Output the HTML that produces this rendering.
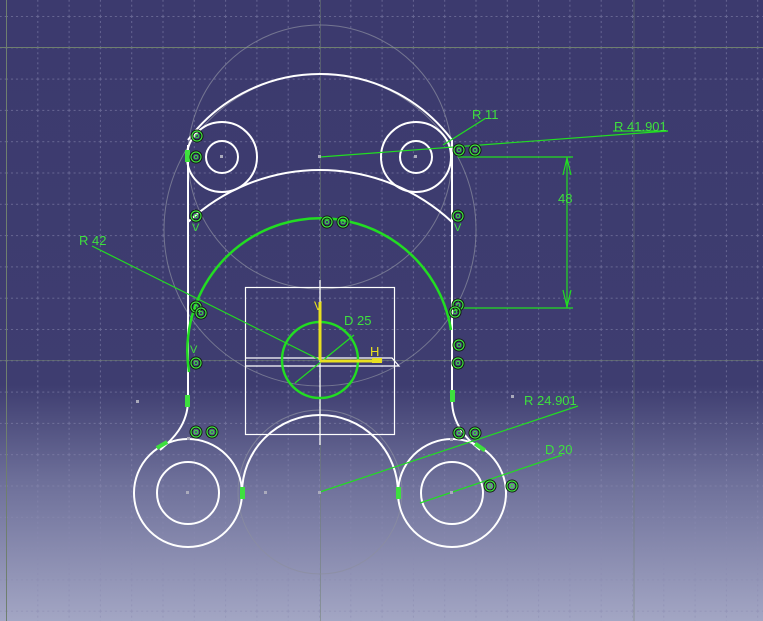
<!DOCTYPE html>
<html><head><meta charset="utf-8"><style>
html,body{margin:0;padding:0;width:763px;height:621px;overflow:hidden}
body{background:linear-gradient(to bottom,#3c3a6e 0px,#3e3d70 385px,#6d6f99 480px,#a3a6c4 621px);font-family:"Liberation Sans",sans-serif}
svg{position:absolute;left:0;top:0}
</style></head><body>
<svg width="763" height="621" viewBox="0 0 763 621">
<defs>
<pattern id="g" x="6" y="16" width="31.3" height="31.3" patternUnits="userSpaceOnUse">
<path d="M0.5 0V31.3M0 0.5H31.3" stroke="#8a8ab0" stroke-width="1" stroke-dasharray="2 3" fill="none" opacity="0.55"/>
</pattern>
<g id="c"><circle r="5" fill="none" stroke="#111" stroke-width="3"/><circle r="5" fill="none" stroke="#3ee03e" stroke-width="1.2"/><circle r="1.8" fill="none" stroke="#3ee03e" stroke-width="1"/></g>
</defs>
<rect width="763" height="621" fill="url(#g)"/>
<g stroke="#6f7f6f" stroke-width="1" fill="none">
<line x1="6.5" y1="0" x2="6.5" y2="621"/>
<line x1="0" y1="47.5" x2="763" y2="47.5"/>
<line x1="0" y1="360.5" x2="763" y2="360.5" opacity="0.6"/>
<line x1="320.5" y1="0" x2="320.5" y2="621" opacity="0.5"/>
<line x1="634" y1="0" x2="634" y2="621" opacity="0.5"/>
</g>
<g stroke="#8c8fa0" stroke-width="1" fill="none" opacity="0.7">
<circle cx="320" cy="157" r="132"/>
<circle cx="320" cy="230" r="156"/>
<circle cx="320" cy="492" r="82"/>
</g>
<g stroke="#fff" stroke-width="2" fill="none">
<path d="M188 140 A165 165 0 0 1 452 140"/>
<path d="M188 222 A193.5 193.5 0 0 1 452 222"/>
<circle cx="222" cy="157" r="35"/><circle cx="222" cy="157" r="16"/>
<circle cx="416" cy="157" r="35"/><circle cx="416" cy="157" r="16"/>
<line x1="188" y1="145" x2="188" y2="400"/>
<line x1="452" y1="140" x2="452" y2="400"/>
<path d="M188 400 C188 425 172 440 160 450"/>
<path d="M452 400 C452 425 468 440 480 450"/>
<circle cx="188" cy="493" r="54"/><circle cx="188" cy="493" r="31"/>
<circle cx="452" cy="493" r="54"/><circle cx="452" cy="493" r="31"/>
<path d="M242 493 A78 78 0 0 1 398 493"/>
</g>
<g stroke="#fff" stroke-width="1.2" fill="none">
<rect x="245.5" y="287.5" width="149" height="147"/>
<path d="M245 358 L392 358 L399 366 L245 366"/>
<line x1="320" y1="280" x2="320" y2="445"/>
</g>
<g stroke="#22dd22" fill="none">
<path d="M189 372 A131 131 0 0 1 451 330" stroke-width="2.5"/>
<circle cx="320" cy="360" r="38" stroke-width="2.5"/>
<g stroke-width="1.2">
<line x1="92" y1="246" x2="320" y2="360"/>
<line x1="486" y1="118" x2="443" y2="145"/>
<line x1="320" y1="157" x2="668" y2="131"/>
<line x1="613" y1="131" x2="668" y2="131"/>
<line x1="458" y1="157" x2="573" y2="157"/>
<line x1="458" y1="308" x2="573" y2="308"/>
<line x1="567" y1="157" x2="567" y2="308"/>
<path d="M563 175 L567 158 L571 175 M563 290 L567 307 L571 290"/>
<line x1="320" y1="492" x2="578" y2="406"/>
<line x1="420" y1="503" x2="562" y2="455"/>
<line x1="295" y1="383" x2="354" y2="335"/>
</g>
</g>
<g fill="#3ee03e">
<rect x="185" y="150" width="5" height="12"/>
<rect x="185" y="395" width="5" height="12"/>
<rect x="450" y="390" width="5" height="12"/>
<rect x="240" y="487" width="5" height="12"/>
<rect x="396" y="487" width="5" height="12"/>
<rect x="156" y="443" width="12" height="4" transform="rotate(-30 162 445)"/>
<rect x="474" y="445" width="12" height="4" transform="rotate(35 480 447)"/>
</g>
<g stroke="#e8e020" stroke-width="3" fill="none">
<line x1="320" y1="360" x2="320" y2="302"/>
<line x1="320" y1="361" x2="381" y2="361"/>
</g>
<rect x="372" y="358" width="10" height="5" fill="#e8e020"/>
<text x="314" y="310" fill="#e8e020" font-size="12">V</text>
<text x="370" y="356" fill="#e8e020" font-size="13">H</text>
<use href="#c" x="197" y="136"/><use href="#c" x="196" y="157"/>
<use href="#c" x="196" y="216"/><use href="#c" x="196" y="307"/><use href="#c" x="201" y="313"/>
<use href="#c" x="196" y="363"/>
<use href="#c" x="196" y="432"/><use href="#c" x="212" y="432"/>
<use href="#c" x="327" y="222"/><use href="#c" x="343" y="222"/>
<use href="#c" x="459" y="150"/><use href="#c" x="475" y="150"/>
<use href="#c" x="458" y="216"/><use href="#c" x="458" y="305"/><use href="#c" x="455" y="312"/>
<use href="#c" x="459" y="345"/><use href="#c" x="458" y="363"/>
<use href="#c" x="459" y="433"/><use href="#c" x="475" y="433"/>
<use href="#c" x="490" y="486"/><use href="#c" x="512" y="486"/>
<g fill="#3ee03e" font-size="13">
<text x="192" y="231" font-size="11">V</text>
<text x="454" y="231" font-size="11">V</text>
<text x="190" y="353" font-size="11">V</text>
<text x="79" y="245">R 42</text>
<text x="472" y="119">R 11</text>
<text x="614" y="131">R 41.901</text>
<text x="558" y="203">48</text>
<text x="344" y="325">D 25</text>
<text x="524" y="405">R 24.901</text>
<text x="545" y="454">D 20</text>
</g>
<g fill="#aab">
<rect x="318" y="155" width="3" height="3"/><rect x="220" y="155" width="3" height="3"/><rect x="414" y="155" width="3" height="3"/>
<rect x="186" y="491" width="3" height="3"/><rect x="450" y="491" width="3" height="3"/><rect x="318" y="491" width="3" height="3"/>
<rect x="136" y="400" width="3" height="3"/><rect x="187" y="437" width="3" height="3"/><rect x="264" y="491" width="3" height="3"/>
<rect x="511" y="395" width="3" height="3"/><rect x="450" y="438" width="3" height="3"/>
</g>
</svg>
</body></html>
